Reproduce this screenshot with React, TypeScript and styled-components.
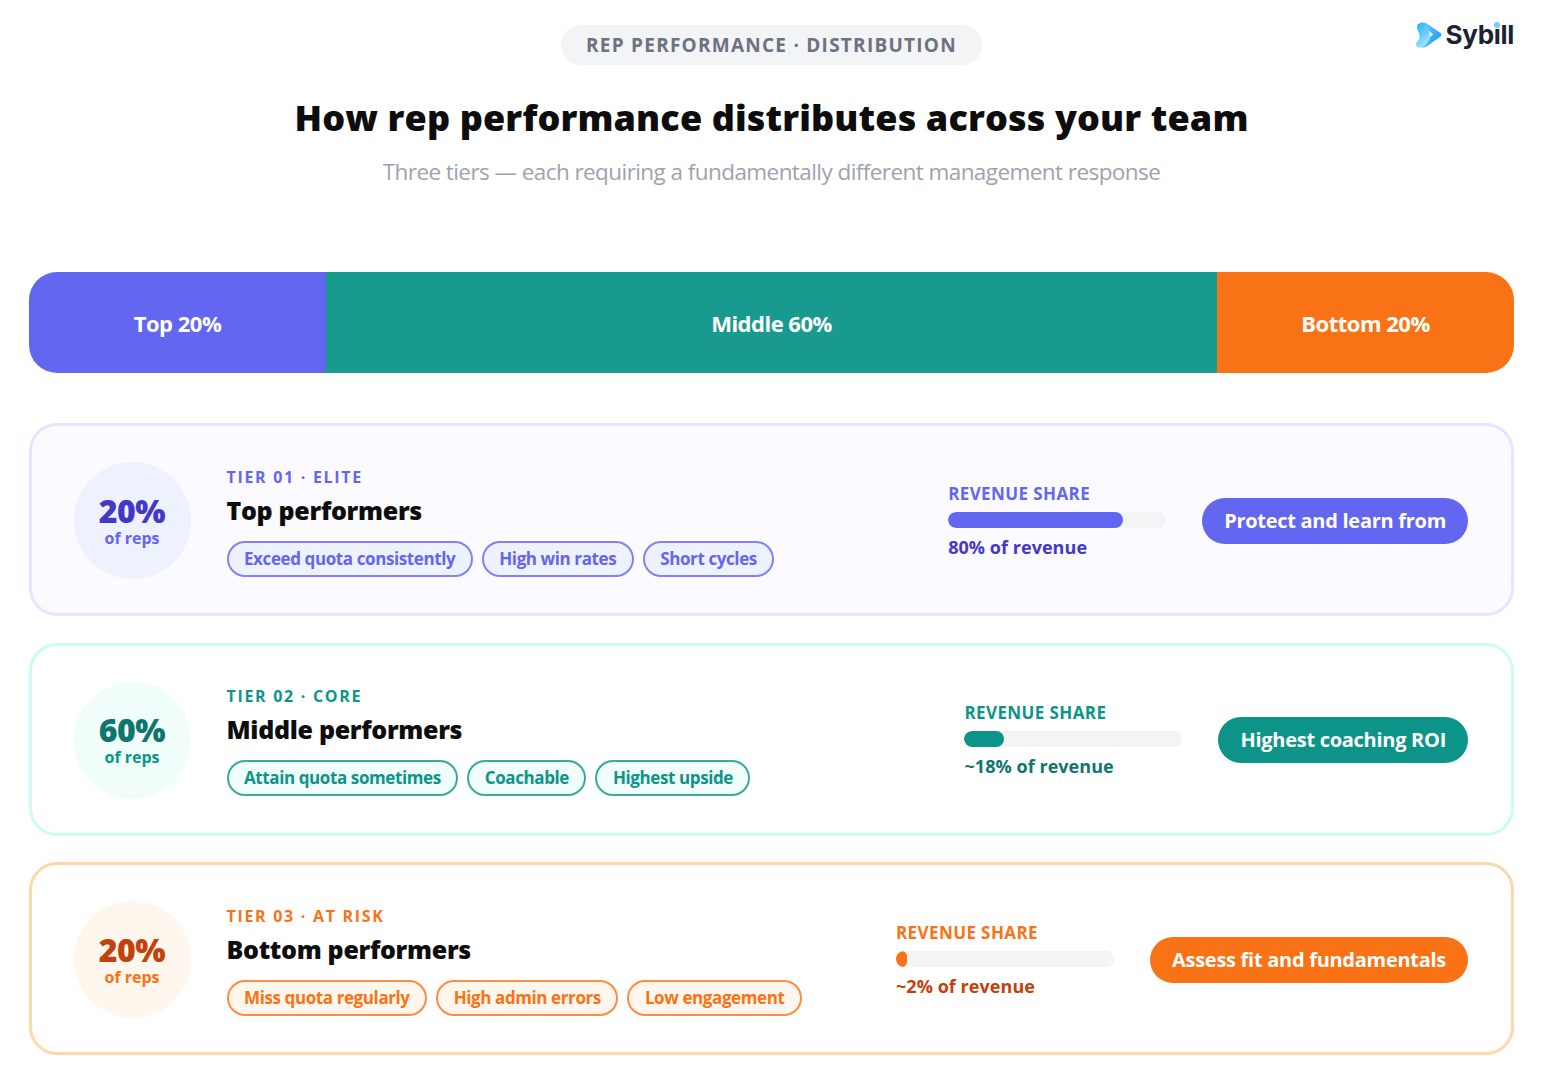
import React from 'react'
import styled, { createGlobalStyle } from 'styled-components'

const GlobalStyle = createGlobalStyle`
  html, body {
    margin: 0;
    padding: 0;
    background: #fff;
    font-family: "Open Sans", "Noto Sans", sans-serif;
  }
`

type Palette = { main: string; deep: string; soft: string; border: string; card: string }

const INDIGO: Palette = { main: '#6366f1', deep: '#4338ca', soft: '#eef2ff', border: '#e0e7ff', card: '#fafaff' }
const TEAL: Palette = { main: '#0d9488', deep: '#0f766e', soft: '#f0fdfa', border: '#ccfbf1', card: '#ffffff' }
const ORANGE: Palette = { main: '#f97316', deep: '#c2410c', soft: '#fff7ed', border: '#fed7aa', card: '#ffffff' }

const SEGMENTS = [
  { label: 'Top 20%', grow: 1, color: '#6366f1' },
  { label: 'Middle 60%', grow: 3, color: '#199a8e' },
  { label: 'Bottom 20%', grow: 1, color: '#f97316' },
]

const TIERS = [
  {
    pct: '20%',
    eyebrow: 'TIER 01 · ELITE',
    title: 'Top performers',
    tags: ['Exceed quota consistently', 'High win rates', 'Short cycles'],
    fill: 80,
    revenue: '80% of revenue',
    action: 'Protect and learn from',
    palette: INDIGO,
  },
  {
    pct: '60%',
    eyebrow: 'TIER 02 · CORE',
    title: 'Middle performers',
    tags: ['Attain quota sometimes', 'Coachable', 'Highest upside'],
    fill: 18,
    revenue: '~18% of revenue',
    action: 'Highest coaching ROI',
    palette: TEAL,
  },
  {
    pct: '20%',
    eyebrow: 'TIER 03 · AT RISK',
    title: 'Bottom performers',
    tags: ['Miss quota regularly', 'High admin errors', 'Low engagement'],
    fill: 5,
    revenue: '~2% of revenue',
    action: 'Assess fit and fundamentals',
    palette: ORANGE,
  },
]

export default function App() {
  return (
    <Page>
      <GlobalStyle />
      <Logo>
        <svg width="27" height="28" viewBox="0 0 27 28" aria-hidden="true">
          <defs>
            <linearGradient id="sybillBack" x1="0" y1="0" x2="1" y2="0.6">
              <stop offset="0" stopColor="#7fd6fb" />
              <stop offset="1" stopColor="#1f9cf2" />
            </linearGradient>
            <linearGradient id="sybillRibbon" x1="0" y1="0" x2="0.5" y2="1">
              <stop offset="0" stopColor="#29b0f6" />
              <stop offset="0.55" stopColor="#62cdfb" />
              <stop offset="1" stopColor="#a6e4fd" />
            </linearGradient>
          </defs>
          <path d="M5 1.5 C8 0.8 10.5 1.6 12.5 3 L25.5 12 C26.8 13 26.8 14.4 25.5 15.4 L13 24.5 C10.5 26.4 7 27 4 26 C8 24 10 21 10 18 C10 13 5 8 5 1.5 Z" fill="url(#sybillBack)" />
          <path d="M3 3 C6 1.5 8.5 1.5 10.5 3 C12 4.5 12.5 6.5 14 9 C15.5 12 16 15 14.5 18.5 C13 22 10 25.5 5.5 26.6 C3 26.8 1.2 25.6 1 23.5 C0.8 21.5 3.5 20 4.5 17 C5.5 13.5 2 9.5 2 6 C2 4.8 2.3 3.6 3 3 Z" fill="url(#sybillRibbon)" />
          <path d="M14 9.8 L18.2 13.2 L14.4 16.4 C15 14.2 14.8 12 14 9.8 Z" fill="#e6f7fe" />
        </svg>
        <LogoWord>Syb<LogoI>i</LogoI>ll</LogoWord>
      </Logo>

      <Header>
        <Pill>REP PERFORMANCE · DISTRIBUTION</Pill>
        <Title>How rep performance distributes across your team</Title>
        <Subtitle>Three tiers — each requiring a fundamentally different management response</Subtitle>
      </Header>

      <Bar>
        {SEGMENTS.map(seg => (
          <Segment key={seg.label} $grow={seg.grow} $color={seg.color}>{seg.label}</Segment>
        ))}
      </Bar>

      <Cards>
        {TIERS.map(tier => (
          <Card key={tier.eyebrow} $p={tier.palette}>
            <Circle $p={tier.palette}>
              <Pct $p={tier.palette}>{tier.pct}</Pct>
              <OfReps $p={tier.palette}>of reps</OfReps>
            </Circle>
            <Info>
              <Eyebrow $p={tier.palette}>{tier.eyebrow}</Eyebrow>
              <CardTitle>{tier.title}</CardTitle>
              <Tags>
                {tier.tags.map(tag => (
                  <Tag key={tag} $p={tier.palette}>{tag}</Tag>
                ))}
              </Tags>
            </Info>
            <Revenue>
              <RevenueLabel $p={tier.palette}>REVENUE SHARE</RevenueLabel>
              <Track>
                <Fill $p={tier.palette} style={{ width: `${tier.fill}%` }} />
              </Track>
              <RevenueValue $p={tier.palette}>{tier.revenue}</RevenueValue>
            </Revenue>
            <Action $p={tier.palette}>{tier.action}</Action>
          </Card>
        ))}
      </Cards>
    </Page>
  )
}

const Page = styled.div`
  position: relative;
  box-sizing: border-box;
  width: 1546px;
  height: 1081px;
  padding: 25px 32px 0 29px;
  overflow: hidden;
  background: #fff;
`

const Logo = styled.div`
  position: absolute;
  top: 20px;
  right: 32px;
  display: flex;
  align-items: center;
  gap: 4px;
`

const LogoWord = styled.span`
  font-family: "Inter", sans-serif;
  font-size: 26px;
  font-weight: 700;
  line-height: 30px;
  letter-spacing: -0.3px;
  color: #1a2332;
`

const LogoI = styled.span`
  position: relative;

  &::after {
    content: '';
    position: absolute;
    left: 50%;
    top: 3px;
    width: 6px;
    height: 6px;
    margin-left: -3px;
    border-radius: 50%;
    background: #6fcdf7;
    box-shadow: 0 0 0 1px #fff;
  }
`

const Header = styled.header`
  display: flex;
  flex-direction: column;
  align-items: center;
`

const Pill = styled.div`
  box-sizing: border-box;
  height: 40px;
  padding: 0 25px;
  border-radius: 20px;
  background: #f3f4f6;
  color: #6b7280;
  font-size: 19px;
  font-weight: 700;
  line-height: 40px;
  letter-spacing: 1.25px;
`

const Title = styled.h1`
  margin: 28px 0 0;
  color: #0d0d0d;
  font-size: 36px;
  font-weight: 800;
  line-height: 50px;
  letter-spacing: 0.12px;
`

const Subtitle = styled.p`
  margin: 13px 0 0;
  color: #9ca3af;
  font-size: 22.5px;
  font-weight: 400;
  line-height: 32px;
  letter-spacing: -0.57px;
`

const Bar = styled.div`
  display: flex;
  height: 101px;
  margin-top: 84px;
  border-radius: 28px;
  overflow: hidden;
`

const Segment = styled.div<{ $grow: number; $color: string }>`
  flex: ${p => p.$grow} 0 0;
  display: flex;
  align-items: center;
  justify-content: center;
  background: ${p => p.$color};
  color: #fff;
  font-size: 22px;
  font-weight: 700;
  letter-spacing: -0.5px;
`

const Cards = styled.div`
  display: flex;
  flex-direction: column;
  gap: 26.5px;
  margin-top: 50px;
`

const Card = styled.section<{ $p: Palette }>`
  box-sizing: border-box;
  display: flex;
  align-items: center;
  height: 193px;
  padding: 0 43px 0 41.5px;
  border: 3px solid ${p => p.$p.border};
  border-radius: 28px;
  background: ${p => p.$p.card};
`

const Circle = styled.div<{ $p: Palette }>`
  flex: none;
  box-sizing: border-box;
  display: flex;
  flex-direction: column;
  align-items: center;
  justify-content: center;
  width: 117px;
  height: 117px;
  margin-top: 2px;
  padding-bottom: 2px;
  border-radius: 50%;
  background: ${p => p.$p.soft};
`

const Pct = styled.div<{ $p: Palette }>`
  color: ${p => p.$p.deep};
  font-size: 32px;
  font-weight: 800;
  line-height: 36px;
  letter-spacing: -0.5px;
`

const OfReps = styled.div<{ $p: Palette }>`
  color: ${p => p.$p.main};
  font-size: 16px;
  font-weight: 700;
  line-height: 18px;
`

const Info = styled.div`
  flex: 1;
  min-width: 0;
  margin-left: 36px;
  padding-top: 3px;
`

const Eyebrow = styled.div<{ $p: Palette }>`
  color: ${p => p.$p.main};
  font-size: 16px;
  font-weight: 700;
  line-height: 22px;
  letter-spacing: 1.7px;
`

const CardTitle = styled.h2`
  margin: 5px 0 0;
  color: #0d0d0d;
  font-size: 25px;
  font-weight: 800;
  line-height: 34px;
  letter-spacing: -0.3px;
`

const Tags = styled.div`
  display: flex;
  gap: 9px;
  margin-top: 14px;
`

const Tag = styled.span<{ $p: Palette }>`
  box-sizing: border-box;
  height: 36px;
  padding: 0 15.5px;
  border: 2px solid ${p => p.$p.main}cc;
  border-radius: 18px;
  background: ${p => p.$p.soft};
  color: ${p => p.$p.main};
  font-size: 17px;
  font-weight: 700;
  line-height: 32px;
  letter-spacing: -0.4px;
`

const Revenue = styled.div`
  flex: none;
  width: 218px;
  margin: 3px 0 0 36px;
`

const RevenueLabel = styled.div<{ $p: Palette }>`
  color: ${p => p.$p.main};
  font-size: 17px;
  font-weight: 700;
  line-height: 24px;
  letter-spacing: 0.4px;
`

const Track = styled.div`
  height: 16px;
  margin-top: 6px;
  border-radius: 8px;
  background: #f3f4f6;
  overflow: hidden;
`

const Fill = styled.div<{ $p: Palette }>`
  height: 100%;
  border-radius: 8px;
  background: ${p => p.$p.main};
`

const RevenueValue = styled.div<{ $p: Palette }>`
  margin-top: 5px;
  color: ${p => p.$p.deep};
  font-size: 18px;
  font-weight: 700;
  line-height: 28px;
  letter-spacing: 0.05px;
`

const Action = styled.div<{ $p: Palette }>`
  flex: none;
  height: 46px;
  margin: 2px 0 0 36px;
  padding: 0 22px;
  border-radius: 23px;
  background: ${p => p.$p.main};
  color: #fff;
  font-size: 20px;
  font-weight: 700;
  line-height: 46px;
  letter-spacing: -0.28px;
`
